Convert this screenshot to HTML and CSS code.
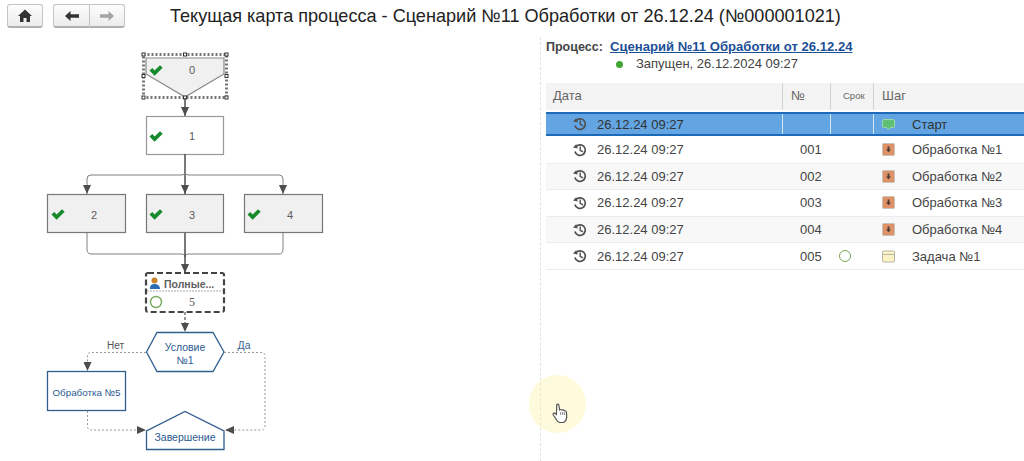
FILE: index.html
```html
<!DOCTYPE html>
<html lang="ru">
<head>
<meta charset="utf-8">
<title>Текущая карта процесса</title>
<link rel="stylesheet" href="styles.css">
</head>
<body>
<svg class="sprite" width="0" height="0" aria-hidden="true">
  <defs>
    <symbol id="clock" viewBox="0 0 14 14">
      <path d="M2.600 4.200A5.300 5.300 0 1 1 1.900 8.500" fill="none" stroke="#4f4f4f" stroke-width="1.700"/>
      <path d="M0 4.400L4.800 5.600L3.200 1.200Z" fill="#4f4f4f"/>
      <path d="M7.200 3.400V7.400L10 8.900" fill="none" stroke="#4f4f4f" stroke-width="1.400"/>
    </symbol>
    <symbol id="proc" viewBox="0 0 13 13">
      <rect x="0.500" y="0.500" width="12" height="12" rx="1" fill="#df9168" stroke="#c9c2b8"/>
      <path d="M5.600 3.500H7.400V6.400H9L6.500 9.200L4 6.400H5.600Z" fill="#4a3a30"/>
    </symbol>
    <symbol id="check" viewBox="0 0 14 11">
      <path d="M.5 5.500L3.300 3L5.600 5.600L11 .3L13.700 2.800L5.600 10.800Z" fill="#178a2b"/>
    </symbol>
    <marker id="head" viewBox="0 0 9 8" refX="9" refY="4" markerWidth="9" markerHeight="8" markerUnits="userSpaceOnUse" orient="auto">
      <path d="M0 0L9 4L0 8Z" fill="#4d4d4d"/>
    </marker>
  </defs>
</svg>

<header class="topbar">
  <div class="toolbar">
    <button class="btn btn-home" type="button" aria-label="Домой">
      <svg width="14" height="13" viewBox="0 0 14 13"><path d="M7 .5L14 7H12V13H8.500V9H5.500V13H2V7H0Z" fill="#333"/></svg>
    </button>
    <div class="btn-group">
      <button class="btn btn-nav" type="button" aria-label="Назад">
        <svg width="14" height="10" viewBox="0 0 14 10"><path d="M0 5L5.500 0V3.300H14V6.700H5.500V10Z" fill="#333"/></svg>
      </button>
      <button class="btn btn-nav" type="button" aria-label="Вперёд">
        <svg width="14" height="10" viewBox="0 0 14 10"><path d="M14 5L8.500 0V3.300H0V6.700H8.500V10Z" fill="#a5a5a5"/></svg>
      </button>
    </div>
  </div>
  <h1 class="title">Текущая карта процесса - Сценарий №11 Обработки от 26.12.24 (№000001021)</h1>
</header>

<main class="workspace">
  <section class="canvas">
    <svg class="diagram" width="540" height="424" viewBox="0 37 540 424">
      <!-- node 0 -->
      <rect class="sel" x="143.500" y="54.500" width="83" height="43"/>
      <path class="n-gray" d="M146 58H224V74L185 97L146 74Z"/>
      <g class="handles">
        <rect x="142" y="53" width="3" height="3"/><rect x="183.500" y="53" width="3" height="3"/><rect x="225" y="53" width="3" height="3"/>
        <rect x="142" y="74.500" width="3" height="3"/><rect x="225" y="74.500" width="3" height="3"/>
        <rect x="142" y="96" width="3" height="3"/><rect x="183.500" y="96" width="3" height="3"/><rect x="225" y="96" width="3" height="3"/>
      </g>
      <use href="#check" x="149" y="65" width="14" height="11"/>
      <text class="num" x="192" y="74">0</text>

      <path class="ln" d="M185 98V116" marker-end="url(#head)"/>
      <!-- node 1 -->
      <rect class="n-white" x="146.500" y="116.500" width="77" height="38"/>
      <use href="#check" x="149" y="131" width="14" height="11"/>
      <text class="num" x="192" y="140">1</text>

      <path class="ln" d="M185 154V194" marker-end="url(#head)"/>
      <path class="ln-thin" d="M87 194V179Q87 175 91 175H182Q185 175 185 172Q185 175 188 175H279Q283 175 283 179V194"/>
      <path class="ln-none" d="M87 186V194" marker-end="url(#head)"/>
      <path class="ln-none" d="M283 186V194" marker-end="url(#head)"/>

      <!-- nodes 2,3,4 -->
      <rect class="n-gray2" x="47.500" y="194.500" width="78" height="38"/>
      <use href="#check" x="51" y="209" width="14" height="11"/>
      <text class="num" x="94" y="219">2</text>
      <rect class="n-gray2" x="146.500" y="194.500" width="77" height="38"/>
      <use href="#check" x="149" y="209" width="14" height="11"/>
      <text class="num" x="192" y="219">3</text>
      <rect class="n-gray2" x="244.500" y="194.500" width="78" height="38"/>
      <use href="#check" x="247" y="209" width="14" height="11"/>
      <text class="num" x="290" y="219">4</text>

      <path class="ln-thin" d="M87 233V249Q87 254 91 254H182Q185 254 185 257Q185 254 188 254H279Q283 254 283 249V233"/>
      <path class="ln" d="M185 233V273" marker-end="url(#head)"/>

      <!-- node 5 -->
      <rect class="n-dash" x="146" y="273" width="78" height="39" rx="2"/>
      <path class="divider" d="M147 291H223"/>
      <g>
        <circle cx="154.500" cy="280.500" r="3" fill="#c8842a"/>
        <path d="M150 288Q150 284 154.500 284Q159 284 160 288V289H150Z" fill="#2b6cb0"/>
      </g>
      <text class="who" x="164" y="288">Полные...</text>
      <circle class="pending" cx="156" cy="302" r="5.500"/>
      <text class="num-serif" x="192" y="306">5</text>

      <path class="ln-dash" d="M185 312V332" marker-end="url(#head)"/>
      <!-- condition -->
      <path class="n-blue" d="M146.500 352L157 332.500H213L224 352L213 371.500H157Z"/>
      <text class="blue" x="185" y="351">Условие</text>
      <text class="blue" x="185" y="364">№1</text>
      <text class="lbl" x="115.500" y="349">Нет</text>
      <text class="lbl-blue" x="244" y="349">Да</text>
      <path class="ln-dot" d="M146 352.500H91Q87.500 352.500 87.500 356V371" marker-end="url(#head)"/>
      <path class="ln-dot" d="M224 352.500H261Q265 352.500 265 356V426Q265 430 261 430H225" marker-end="url(#head)"/>
      <!-- Обработка 5 -->
      <rect class="n-blue" x="47.500" y="371.500" width="78" height="39"/>
      <text class="blue blue-sm" x="86.500" y="396">Обработка №5</text>
      <path class="ln-dot" d="M87.500 411V426Q87.500 430 91 430H146" marker-end="url(#head)"/>
      <!-- finish -->
      <path class="n-blue" d="M146.500 449.500V431L185 411.500L224 431V449.500Z"/>
      <text class="blue" x="185" y="441">Завершение</text>
    </svg>
  </section>

  <section class="panel">
    <div class="proc-head">
      <span class="proc-label">Процесс:</span>
      <a class="proc-link" href="#">Сценарий №11 Обработки от 26.12.24</a>
    </div>
    <div class="proc-state"><span class="dot"></span>Запущен, 26.12.2024 09:27</div>

    <div class="grid">
      <div class="row head">
        <div class="cell c-date">Дата</div>
        <div class="cell c-num">№</div>
        <div class="cell c-due">Срок</div>
        <div class="cell c-step">Шаг</div>
      </div>
      <div class="row selected">
        <div class="cell c-date"><svg class="ic-clock"><use href="#clock"/></svg>26.12.24 09:27</div>
        <div class="cell c-num"></div>
        <div class="cell c-due"></div>
        <div class="cell c-step"><svg class="ic-step" viewBox="0 0 13 13"><path d="M2 1.500H11Q12.500 1.500 12.500 3V8Q12.500 9.500 11 9.500H8.500L6.500 11.500L4.500 9.500H2Q.5 9.500 .5 8V3Q.5 1.500 2 1.500Z" fill="#5fc074" stroke="#9fd6ac"/></svg>Старт</div>
      </div>
      <div class="row">
        <div class="cell c-date"><svg class="ic-clock"><use href="#clock"/></svg>26.12.24 09:27</div>
        <div class="cell c-num">001</div>
        <div class="cell c-due"></div>
        <div class="cell c-step"><svg class="ic-step"><use href="#proc"/></svg>Обработка №1</div>
      </div>
      <div class="row alt">
        <div class="cell c-date"><svg class="ic-clock"><use href="#clock"/></svg>26.12.24 09:27</div>
        <div class="cell c-num">002</div>
        <div class="cell c-due"></div>
        <div class="cell c-step"><svg class="ic-step"><use href="#proc"/></svg>Обработка №2</div>
      </div>
      <div class="row">
        <div class="cell c-date"><svg class="ic-clock"><use href="#clock"/></svg>26.12.24 09:27</div>
        <div class="cell c-num">003</div>
        <div class="cell c-due"></div>
        <div class="cell c-step"><svg class="ic-step"><use href="#proc"/></svg>Обработка №3</div>
      </div>
      <div class="row alt">
        <div class="cell c-date"><svg class="ic-clock"><use href="#clock"/></svg>26.12.24 09:27</div>
        <div class="cell c-num">004</div>
        <div class="cell c-due"></div>
        <div class="cell c-step"><svg class="ic-step"><use href="#proc"/></svg>Обработка №4</div>
      </div>
      <div class="row">
        <div class="cell c-date"><svg class="ic-clock"><use href="#clock"/></svg>26.12.24 09:27</div>
        <div class="cell c-num">005</div>
        <div class="cell c-due"><span class="ring"></span></div>
        <div class="cell c-step"><svg class="ic-step" viewBox="0 0 13 13"><rect x=".5" y="1" width="12" height="11" rx="1" fill="#fbf3c6" stroke="#b9b6a4"/><path d="M.5 4.500H12.500" stroke="#b9b6a4"/></svg>Задача №1</div>
      </div>
    </div>
  </section>
</main>

<div class="pointer">
  <svg width="16" height="21" viewBox="0 0 16 21"><path d="M4.800 1.500Q6.200 .6 6.800 2L7.600 7Q9 6 10 7Q11.500 6.400 12.300 7.800Q14 7.400 14.500 9.500L14.700 14Q14.500 18 11.500 19.500H7.500Q5.500 19 4 16L1.300 12Q.5 10.300 2.200 10L4.400 11.500Z" fill="#fff" stroke="#555" stroke-width="1.200"/><path d="M8.700 9V12M10.700 9V12M12.500 9.500V12" stroke="#888"/></svg>
</div>
</body>
</html>
```
FILE: styles.css
```css
* { box-sizing: border-box; }
html, body { margin: 0; height: 100%; }
body {
  width: 1024px;
  height: 461px;
  overflow: hidden;
  background: #fff;
  color: #333;
  font-family: "Liberation Sans", Arial, sans-serif;
  position: relative;
}
.sprite { position: absolute; }

.topbar {
  height: 37px;
  display: flex;
  align-items: flex-start;
  padding: 4px 0 0 7px;
}
.toolbar { display: flex; gap: 10px; width: 163px; flex: none; }
.btn {
  height: 24px;
  padding: 0;
  display: flex;
  align-items: center;
  justify-content: center;
  background: linear-gradient(#fdfdfd, #ececec);
  border: 1px solid #c4c4c4;
  border-bottom: 2px solid #b0b0b0;
  border-radius: 3px;
}
.btn-home { width: 36px; }
.btn-group { display: flex; }
.btn-nav { width: 36px; }
.btn-nav:first-child { border-radius: 3px 0 0 3px; border-right: 0; }
.btn-nav:last-child { border-radius: 0 3px 3px 0; }
.title {
  margin: 2px 0 0;
  font-size: 18.100px;
  font-weight: 400;
  line-height: 20px;
  color: #222;
  white-space: nowrap;
}

.workspace { display: flex; height: 424px; }
.canvas { width: 540px; flex: none; }
.diagram { display: block; }

.panel {
  flex: 1;
  min-width: 0;
  border-left: 1px dashed #e2e2e2;
  padding: 3px 0 0 5px;
}
.proc-head {
  display: flex;
  align-items: baseline;
  gap: 6px;
  line-height: 13px;
}
.proc-label { font-size: 12.500px; font-weight: 700; color: #444; width: 58px; flex: none; white-space: nowrap; }
.proc-link {
  font-size: 13.100px;
  font-weight: 700;
  color: #1c4f96;
  text-decoration: underline;
  white-space: nowrap;
}
.proc-state {
  display: flex;
  align-items: center;
  margin: 2px 0 0 69px;
  font-size: 13px;
  line-height: 15px;
  color: #444;
}
.dot {
  width: 7px;
  height: 7px;
  border-radius: 50%;
  background: #3fa535;
  margin: 1px 13px 0 1px;
}

.grid { margin-top: 12px; font-size: 13px; color: #444; }
.row {
  display: grid;
  grid-template-columns: 236px 48px 43px 1fr;
  height: 26.600px;
  align-items: stretch;
  border-bottom: 1px solid #ececec;
}
.cell { display: flex; align-items: center; min-width: 0; white-space: nowrap; }
.c-date { padding-left: 27px; }
.c-date .ic-clock { margin-right: 10px; }
.c-num { padding-left: 18px; }
.c-due { padding-left: 9px; }
.c-step { padding-left: 9px; }

.ic-clock { width: 14px; height: 14px; flex: none; }
.ic-step { width: 13px; height: 13px; flex: none; margin-right: 17px; }
.ring {
  width: 12px;
  height: 12px;
  border: 1.500px solid #78a85c;
  border-radius: 50%;
}

.alt { background: #f8f8f8; }

.head {
  height: 27px;
  background: #f3f3f3;
  border-bottom: 0;
  color: #666;
}
.head .cell { border-left: 1px solid #d2d2d2; padding-left: 8px; padding-bottom: 3px; }
.head .cell:first-child { border-left: 0; padding-left: 7px; }
.head .c-due { font-size: 9.500px; padding-left: 12px; }

.selected {
  height: 24px;
  margin: 2px 0 1px;
  background: #62a5e2;
  border: 2px solid #1c69b8;
  border-width: 2px 0;
  color: #333;
}
.selected .cell + .cell { border-left: 1px solid #d5e6f5; }
.selected .c-step { padding-left: 8px; }
.selected .ic-step { margin-right: 17px; }

.n-gray { fill: #f0f0f0; stroke: #888; stroke-width: 1.200; }
.n-white { fill: #fff; stroke: #999; stroke-width: 1.200; }
.n-gray2 { fill: #f0f0f0; stroke: #777; stroke-width: 1.200; }
.n-blue { fill: #fff; stroke: #2f5f8f; stroke-width: 1.300; }
.n-dash { fill: #fff; stroke: #444; stroke-width: 2.200; stroke-dasharray: 6 3; }
.sel { fill: #fff; stroke: #777; stroke-width: 3; stroke-dasharray: 2 2; }
.handles rect { fill: #fff; stroke: #333; stroke-width: 1; }
.divider { stroke: #aaa; stroke-dasharray: 2 1; fill: none; }
.pending { fill: #fff; stroke: #78a85c; stroke-width: 1.400; }
.ln { fill: none; stroke: #4d4d4d; stroke-width: 1.500; }
.ln-thin { fill: none; stroke: #808080; stroke-width: 1; }
.ln-none { fill: none; stroke: none; }
.ln-dash { fill: none; stroke: #555; stroke-width: 1.200; stroke-dasharray: 3 2; }
.ln-dot { fill: none; stroke: #999; stroke-width: 1; stroke-dasharray: 2 2; }

.diagram text { font-family: "Liberation Sans", Arial, sans-serif; }
.num { font-size: 11px; fill: #5c5c5c; text-anchor: middle; }
.diagram .num-serif { font-family: "Liberation Serif", serif; font-size: 12px; fill: #555; text-anchor: middle; }
.who { font-size: 10.500px; font-weight: 700; fill: #5e5e5e; }
.blue { font-size: 10.500px; fill: #2a5a90; text-anchor: middle; }
.blue-sm { font-size: 9.800px; }
.lbl { font-size: 10px; fill: #555; text-anchor: middle; }
.lbl-blue { font-size: 10.500px; fill: #3a5f90; text-anchor: middle; }

.pointer {
  position: absolute;
  left: 529px;
  top: 375px;
  width: 57px;
  height: 58px;
  border-radius: 50%;
  background: rgba(250, 245, 170, 0.42);
  display: flex;
  align-items: center;
  justify-content: center;
  padding: 18px 0 0 5px;
}
```
